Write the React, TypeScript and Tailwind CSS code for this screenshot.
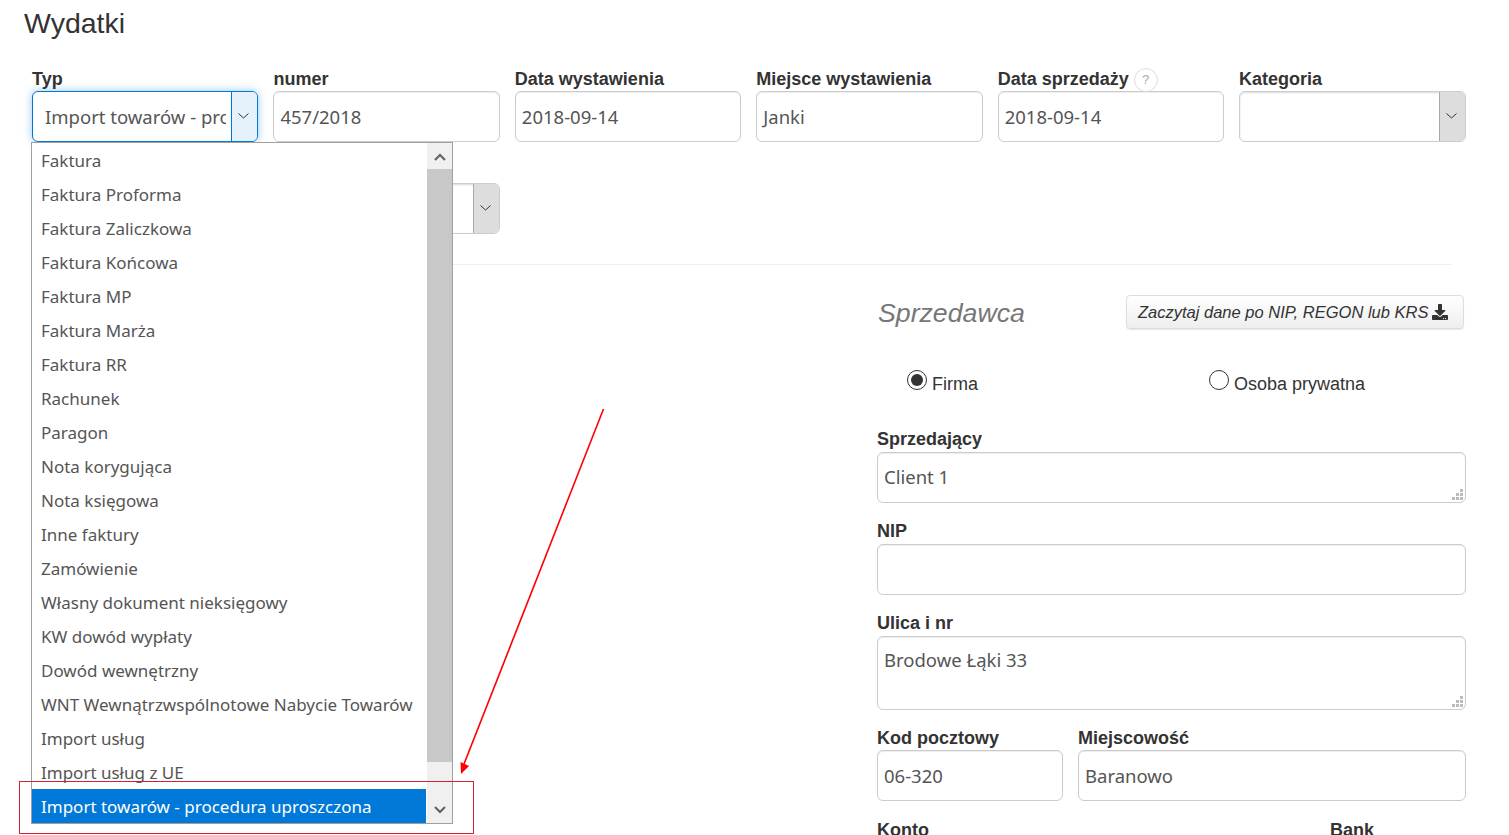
import { FaDownload } from 'react-icons/fa'

const options = [
  'Faktura',
  'Faktura Proforma',
  'Faktura Zaliczkowa',
  'Faktura Końcowa',
  'Faktura MP',
  'Faktura Marża',
  'Faktura RR',
  'Rachunek',
  'Paragon',
  'Nota korygująca',
  'Nota księgowa',
  'Inne faktury',
  'Zamówienie',
  'Własny dokument nieksięgowy',
  'KW dowód wypłaty',
  'Dowód wewnętrzny',
  'WNT Wewnątrzwspólnotowe Nabycie Towarów',
  'Import usług',
  'Import usług z UE',
]

const inputText = "font-['Noto_Sans',sans-serif] text-[18.5px] text-[#555]"

function Chevron() {
  return (
    <svg width="11" height="6" viewBox="0 0 11 6" fill="none" className="mr-[2px] mb-[2px]">
      <path d="M0.5 0.5 L5.5 5 L10.5 0.5" stroke="#333" strokeWidth="1" />
    </svg>
  )
}

function Label({ children, gap = false }: { children: React.ReactNode; gap?: boolean }) {
  return (
    <label className={`block h-[23px] text-[18px] leading-[23px] font-bold text-[#333] ${gap ? 'mb-[1px]' : ''}`}>
      {children}
    </label>
  )
}

function Input({ value, h = 'h-[51px]', pos = 'items-center pt-[1px]' }: { value?: string; h?: string; pos?: string }) {
  return (
    <div className={`${h} flex ${pos} rounded-[6px] border border-[#ccc] bg-white px-[6px] shadow-[inset_0_1px_1px_rgba(0,0,0,0.075)] ${inputText}`}>
      {value}
    </div>
  )
}

function Grip() {
  return (
    <svg width="12" height="12" viewBox="0 0 12 12" className="absolute right-[2px] bottom-[2px]" fill="#bbb">
      <rect x="8" y="0" width="3" height="3" />
      <rect x="4" y="4" width="3" height="3" />
      <rect x="8" y="4" width="3" height="3" />
      <rect x="0" y="8" width="3" height="3" />
      <rect x="4" y="8" width="3" height="3" />
      <rect x="8" y="8" width="3" height="3" />
    </svg>
  )
}

function Textarea({ value, h, pos }: { value: string; h: string; pos: string }) {
  return (
    <div className="relative">
      <Input value={value} h={h} pos={pos} />
      <Grip />
    </div>
  )
}

function EmptySelect() {
  return (
    <div className="flex h-[51px] overflow-hidden rounded-[6px] border border-[#ccc] bg-white shadow-[inset_0_1px_2px_rgba(0,0,0,0.15)]">
      <div className="flex-1" />
      <div className="flex w-[26px] items-center justify-center border-l border-[#aaa] bg-[#ddd]">
        <Chevron />
      </div>
    </div>
  )
}

function Radio({ checked }: { checked?: boolean }) {
  return (
    <span className="flex h-[20px] w-[20px] items-center justify-center rounded-full border border-[#333] bg-white">
      {checked && <span className="h-[12px] w-[12px] rounded-full bg-[#333]" />}
    </span>
  )
}

function Field({ label, value }: { label: React.ReactNode; value?: string }) {
  return (
    <div>
      <Label>{label}</Label>
      <Input value={value} />
    </div>
  )
}

export default function App() {
  return (
    <div className="relative h-[835px] overflow-hidden bg-white font-['Liberation_Sans',sans-serif] text-[#333]">
      <h1 className="pt-[5px] pl-[24px] text-[28.5px] leading-[36px] font-normal text-[#333]">Wydatki</h1>

      {/* GORNY FORMULARZ */}
      <div className="mt-[27px] mr-[43.5px] ml-[32px] grid grid-cols-6 gap-x-[15px]">
        <div>
          <Label>Typ</Label>
          <div className={`flex h-[51px] overflow-hidden rounded-[6px] border border-[#0078d7] bg-white shadow-[0_0_8px_rgba(102,175,233,0.7)] ${inputText}`}>
            <div className="flex-1 overflow-hidden pl-[12px] leading-[49px] whitespace-nowrap">
              Import towarów - procedura uproszczona
            </div>
            <div className="ml-[5px] flex w-[26px] shrink-0 items-center justify-center border-l border-[#0078d7] bg-[#e5f1fb]">
              <Chevron />
            </div>
          </div>
        </div>
        <Field label="numer" value="457/2018" />
        <Field label="Data wystawienia" value="2018-09-14" />
        <Field label="Miejsce wystawienia" value="Janki" />
        <Field
          label={
            <span className="flex h-[23px] items-center gap-[5px]">
              Data sprzedaży
              <span className="flex h-[24px] w-[24px] items-center justify-center rounded-full border border-[#ddd] text-[13px] font-normal text-[#aaa]">?</span>
            </span>
          }
          value="2018-09-14"
        />
        <div>
          <Label>Kategoria</Label>
          <EmptySelect />
        </div>
        <div className="col-span-2 mt-[41px]">
          <EmptySelect />
        </div>
      </div>

      <hr className="mt-[30px] mr-[58px] ml-[32px] border-t border-[#eee]" />

      {/* SPRZEDAWCA */}
      <div className="mt-[30px] mr-[43px] ml-[877px]">
        <div className="flex h-[36px] items-start justify-between pr-[2px]">
          <h2 className="pl-[1px] text-[26.7px] leading-[36px] font-normal text-[#777] italic">Sprzedawca</h2>
          <button className="flex h-[34px] w-[338px] items-center gap-[4px] rounded-[4px] border border-[#ddd] bg-gradient-to-b from-white to-[#eee] pl-[11px] text-[16.5px] text-[#333] italic shadow-[0_1px_1px_rgba(0,0,0,0.1)]">
            Zaczytaj dane po NIP, REGON lub KRS
            <FaDownload className="h-[16px] w-[16px]" />
          </button>
        </div>

        <div className="mt-[40px] flex h-[26px] items-center text-[18px]">
          <div className="flex w-[332px] items-center gap-[5px] pl-[30px]">
            <span className="-mt-[8px]"><Radio checked /></span>
            Firma
          </div>
          <div className="flex items-center gap-[5px]">
            <span className="-mt-[8px]"><Radio /></span>
            Osoba prywatna
          </div>
        </div>

        <div className="mt-[31px]">
          <Label gap>Sprzedający</Label>
          <Textarea value="Client 1" h="h-[51px]" pos="items-center pb-[2px]" />
        </div>
        <div className="mt-[17px]">
          <Label gap>NIP</Label>
          <Input />
        </div>
        <div className="mt-[17px]">
          <Label gap>Ulica i nr</Label>
          <Textarea value="Brodowe Łąki 33" h="h-[74px]" pos="items-start pt-[9px]" />
        </div>
        <div className="mt-[17px] grid grid-cols-[186px_1fr] gap-x-[15px]">
          <Field label="Kod pocztowy" value="06-320" />
          <Field label="Miejscowość" value="Baranowo" />
        </div>
        <div className="mt-[18px] grid grid-cols-[453px_1fr]">
          <Label>Konto</Label>
          <Label>Bank</Label>
        </div>
      </div>

      {/* ROZWINIETA LISTA */}
      <div className="absolute top-[142px] left-[31px] flex h-[682px] w-[422px] border border-[#a0a0a0] bg-white font-['Noto_Sans',sans-serif] text-[17px] text-[#555]">
        <ul className="w-[394px]">
          {options.map((o) => (
            <li key={o} className="h-[34px] pl-[9px] leading-[35px] whitespace-nowrap">{o}</li>
          ))}
          <li className="h-[34px] bg-[#0078d7] pl-[9px] leading-[35px] whitespace-nowrap text-white">
            Import towarów - procedura uproszczona
          </li>
        </ul>
        <div className="ml-[1px] flex w-[25px] flex-col items-center justify-between bg-[#f0f0f0]">
          <div className="flex h-[26px] w-full items-center justify-center pt-[2px]">
            <svg width="12" height="8" viewBox="0 0 12 8" fill="none"><path d="M1 7 L6 2 L11 7" stroke="#606060" strokeWidth="2" /></svg>
          </div>
          <div className="h-[594px] w-full bg-[#c8c8c8]" />
          <div className="flex h-[61px] w-full items-end justify-center pb-[9px]">
            <svg width="12" height="8" viewBox="0 0 12 8" fill="none"><path d="M1 1 L6 6 L11 1" stroke="#606060" strokeWidth="2" /></svg>
          </div>
        </div>
      </div>

      {/* ADNOTACJA */}
      <div className="absolute top-[781px] left-[19px] h-[53px] w-[455px] border border-[#d2222a]" />
      <svg className="absolute top-0 left-0" width="1509" height="835" fill="none">
        <path d="M603.5 409 L464 764" stroke="#f00" strokeWidth="1.6" />
        <path d="M461 774 L460.5 762 L469 766 Z" fill="#f00" />
      </svg>
    </div>
  )
}
